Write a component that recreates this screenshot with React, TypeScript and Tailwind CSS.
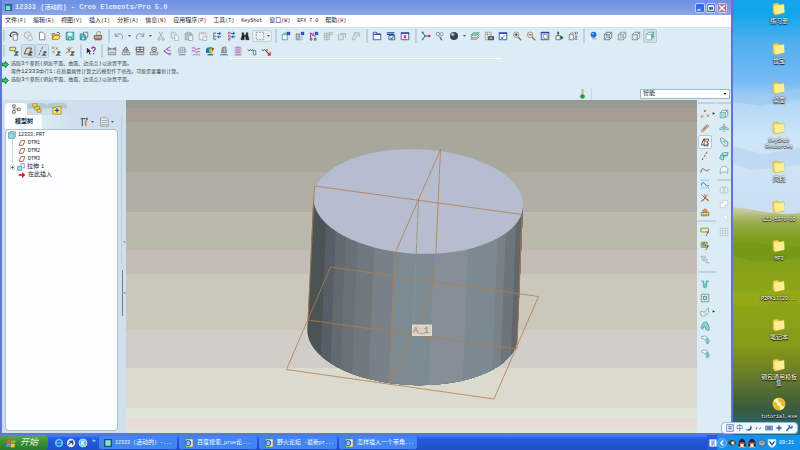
import React from "react";

type Kids = { children?: React.ReactNode };

/* Chinese text with its Latin runs set in a narrower monospace size */
function Mixed({ text, latin = "text-[5px]" }: { text: string; latin?: string }) {
  return (
    <>
      {text.split(/([\x20-\x7e]+)/).map((part, i) =>
        i % 2 ? (
          <span key={i} className={latin}>{part}</span>
        ) : (
          part
        )
      )}
    </>
  );
}

function Svg({ children, size = "size-3" }: Kids & { size?: string }) {
  return (
    <svg viewBox="0 0 12 12" className={`${size} shrink-0`} fill="none" stroke="#566069" strokeWidth="1" aria-hidden="true">
      {children}
    </svg>
  );
}

const paper = <path d="M3 1.500h4l2.500 2.500v6.500h-6.500z" fill="#fff" stroke="#777" />;
const ruler = <path d="M1.500 7.500h9v3h-9zM4 9v1.500M6 9v1.500M8 9v1.500" fill="#eef0f0" stroke="#666" strokeWidth=".8" />;
const cube = (fill: string, stroke: string, inner = false) => (
  <>
    <path d="M1.500 4.500h6v6h-6zM1.500 4.500l3-3h6l-3 3M7.500 10.500l3-3v-6" fill={fill} stroke={stroke} />
    {inner && <path d="M4.500 1.500v6h6M4.500 7.500l-3 3" stroke={stroke} strokeWidth=".7" />}
  </>
);
const cross = (x: number, y: number, c = "#b0622f") => (
  <path key={`${x}-${y}`} d={`M${x - 1.3} ${y - 1.3}l2.600 2.600M${x + 1.3} ${y - 1.3}l-2.600 2.600`} stroke={c} />
);
const badge = <path d="M7 1h4v4h-4z" fill="#3154b8" stroke="none" />;
const eye = <path d="M6 11.500l2.500-3 2.500 3zM8 6.500h3v2h-3z" fill="#4c5b58" stroke="#4b645c" strokeWidth=".5" />;
const plane = <path d="M1.500 9.500l3-7h6l-3 7z" stroke="#8d4a25" strokeWidth="1.200" />;
const lens = (mark: React.ReactNode) => (
  <>
    <path d="M7 7l4 4" stroke="#b36a32" strokeWidth="1.800" />
    <circle cx="5" cy="4.500" r="3.300" fill="#f6f4e4" stroke="#888" />
    {mark}
  </>
);
const win = (body: React.ReactNode) => (
  <>
    <path d="M1.500 2.500h9v8h-9z" fill="#fff" stroke="#2644a8" />
    <path d="M1 2.500h10" stroke="#2644a8" strokeWidth="1.800" />
    {body}
  </>
);

const I: Record<string, React.ReactNode> = {
  home: <><path d="M1.500 6c0-6 9-6 9-.5" stroke="#555" strokeWidth="1.400" /><path d="M5 4h3l2 2v5h-5z" fill="#fff" stroke="#777" /><path d="M1 5l2 2" stroke="#222" strokeWidth="1.500" /></>,
  globe: <><circle cx="5.500" cy="5" r="4" fill="#e4e7e8" stroke="#a5acb0" /><path d="M6 6h4l1 2v3h-5z" fill="#f5f6f6" stroke="#a5acb0" /></>,
  file: paper,
  open: <><path d="M1.500 10V3h3l1 1.500h4V6" fill="#e8bd48" stroke="#9b7b22" /><path d="M1.500 10l2-4.500h7.500l-2 4.500z" fill="#ffe278" stroke="#9b7b22" /><path d="M7 2c2-1 3 0 3.500 1.500" stroke="#333" /></>,
  save: <><path d="M1.500 1.500h9v9h-9z" fill="#6ad3d8" stroke="#338085" /><path d="M3.500 2h5v3.500h-5z" fill="#e9f8f8" stroke="none" /><path d="M4 8h4v2.500h-4z" fill="#fff" stroke="#338085" /></>,
  saveas: <><path d="M1.500 3.500h7v7h-7z" fill="#57c9cf" stroke="#338085" /><path d="M3 7.500h4v3h-4z" fill="#fff" stroke="#338085" /><path d="M5.500 1.500h5v6h-3v-3h-2z" fill="#dff1ee" stroke="#5b7775" /></>,
  print: <><path d="M4 5l1-4h4l-1 4z" fill="#fff" stroke="#887" /><path d="M1.500 5.500h9v4h-9z" fill="#c9aa8d" stroke="#6d5848" /><path d="M2 10.500h8" stroke="#514239" /></>,
  undo: <path d="M1.500 2.500v4h4M2 6c2-4 8-3 8.500 1 0 1-.5 2-1.500 3" stroke="#8197a8" strokeWidth="1.200" />,
  redo: <path d="M10.500 2.500v4h-4M10 6c-2-4-8-3-8.500 1 0 1 .5 2 1.500 3" stroke="#8197a8" strokeWidth="1.200" />,
  cut: <><path d="M3.500 1l4 7M8 1l-4 7" stroke="#9ba6ad" /><circle cx="3.500" cy="9.500" r="1.500" stroke="#9ba6ad" /><circle cx="8.500" cy="9.500" r="1.500" stroke="#9ba6ad" /></>,
  copy: <><path d="M1.500 1.500h4l2 2v5h-6z" fill="#e5e9ec" stroke="#a4adb3" /><path d="M5.500 4.500h3l2 2v5h-5z" fill="#f1f3f4" stroke="#a4adb3" /></>,
  paste: <><path d="M1.500 2.500h8v8h-8z" fill="#b7c0c4" stroke="#9aa4a9" /><path d="M4 1.500h3v2h-3zM5.500 5.500h5v6h-5z" fill="#eef1f2" stroke="#9aa4a9" /></>,
  paste2: <><path d="M1.500 2.500h8v8h-8z" fill="#eef1f2" stroke="#a9b1b5" /><path d="M4 1.500h3v2h-3zM6 6.500h4.500v5h-4.500z" fill="#f4f4ee" stroke="#a9b1b5" /></>,
  regen: <><path d="M2 2v8M2 3h2M2 6.500h2M2 10h2" stroke="#59666e" /><path d="M3 1.500h2v2h-2zM3 5.500h2v2h-2zM3 9h2v2h-2z" fill="#8f9a9f" stroke="none" /><path d="M6 3h4M8.500 1l2 2-2 2M11 7h-4M8.500 5.500l-2 1.500 2 1.500" stroke="#1e5bc4" strokeWidth="1.200" /></>,
  regen2: <><path d="M3 1.500h2v2h-2zM3 5.500h2v2h-2zM3 9h2v2h-2z" fill="#fff" stroke="#a73a38" strokeWidth=".8" /><path d="M6 3h4M8.500 1l2 2-2 2M11 7h-4M8.500 5.500l-2 1.500 2 1.500" stroke="#1e5bc4" strokeWidth="1.200" /></>,
  find: <path d="M2.500 2h2v2l1 1h1l1-1V2h2v3l1.500 5.500h-4V7h-2v3.500H1L2.500 5z" fill="#1f2426" stroke="#1f2426" strokeWidth=".5" />,
  mark: <path d="M1.500 1.500h9v9h-9z" stroke="#6f8592" strokeDasharray="2 1.500" />,
  box1: <><path d="M1.500 4.500h6v6h-6z" fill="#fff" stroke="#4e9ca0" /><path d="M1.500 4.500l2-2h4" stroke="#4e9ca0" />{badge}</>,
  box2: <><path d="M1.500 3.500h4v7h-4z" fill="#b6bfc3" stroke="#788489" /><path d="M5.500 7h3v3.500h-3z" fill="#eef2f3" stroke="#98a2a6" />{badge}</>,
  box3: <><path d="M2 8V2l3 4V2M6 6h2" stroke="#a72b9d" strokeWidth="1.200" /><path d="M1.500 8.500h2v2.500h-2zM6.500 8.500h2v2.500h-2z" stroke="#333" strokeWidth=".8" />{badge}</>,
  g1: <><path d="M1.500 2.500h6v8h-6zM1.500 5h6M1.500 7.500h6M4.500 2.500v8" fill="#e7ebec" stroke="#a4adb1" /><path d="M8 1.500h3v3h-3z" stroke="#a4adb1" /></>,
  g2: <><path d="M1.500 4.500h6v6h-6z" fill="#dfe5e7" stroke="#a4adb1" /><path d="M4 3h6v5" stroke="#a4adb1" /></>,
  g3: <path d="M1.500 10.500c0-5 3-7 9-7v2.500c-4 0-6 1-6 4.500zM4 5V2h6" fill="#e3e7e9" stroke="#a4adb1" />,
  w1: <><path d="M1.500 1.500h4v2h5v7h-9z" fill="#fff" stroke="#2644a8" /><path d="M1.500 4h9" stroke="#2644a8" strokeWidth="1.400" /></>,
  w2: <><path d="M1 2h9M1 4h9" stroke="#2644a8" strokeWidth="1.300" /><path d="M3.500 5.500h7v5h-7z" fill="#fff" stroke="#2644a8" /><path d="M5 8l1.500 1.500 3-3" stroke="#24963f" strokeWidth="1.300" /></>,
  w3: win(<path d="M4.500 5l3 4M7.500 5l-3 4" stroke="#d22" strokeWidth="1.300" />),
  csys: <><path d="M2 2l3 4-3 4M5 6h5" stroke="#226" /><circle cx="2" cy="2" r="1.300" fill="#28a63b" stroke="none" /><circle cx="2" cy="10" r="1.300" fill="#1fb4c4" stroke="none" /><circle cx="10" cy="6" r="1.500" fill="#dd2438" stroke="none" /></>,
  spin: <><circle cx="3.500" cy="3.500" r="2" stroke="#7689a5" /><circle cx="8" cy="4" r="2" stroke="#7689a5" /><path d="M4 6l5 5M7 7v4" stroke="#47597d" /></>,
  ball: <><circle cx="6" cy="6" r="4.800" fill="#39424a" stroke="none" /><circle cx="4.600" cy="4.300" r="2.200" fill="#8d979e" stroke="none" /><circle cx="4.200" cy="3.900" r="1" fill="#dfe4e7" stroke="none" /></>,
  layers: <><path d="M1 10l3-3h7l-3 3z" fill="#d8d3b2" stroke="#6c6a55" strokeWidth=".7" /><path d="M1 7.500l3-3h7l-3 3z" fill="#fff" stroke="#55716c" strokeWidth=".7" /><path d="M1 5l3-3h7l-3 3z" fill="#83d6d3" stroke="#55716c" strokeWidth=".7" /></>,
  snap: <><path d="M1.500 1.500h7v9h-7zM1.500 4h7M4 1.500v9" fill="#fff" stroke="#999" /><path d="M5.500 6.500h6v4h-6z" fill="#666" stroke="#444" /><circle cx="8.500" cy="8.500" r="1.100" fill="#ddd" stroke="none" /></>,
  repaint: win(<path d="M4 9l5-4M4 9V7M4 9h2" stroke="#3b7abb" />),
  zin: lens(<path d="M3 4.500h4M5 2.500v4" stroke="#333" />),
  zout: lens(<path d="M3 4.500h4" stroke="#333" />),
  zfit: <><path d="M1.500 1.500h9v9h-9z" fill="#dbe3f0" stroke="#2644a8" /><path d="M1 2h10" stroke="#2644a8" strokeWidth="1.500" /><path d="M4.500 4h3l1 1.500v3l-2 1-2-1z" fill="#fff" stroke="#887" /></>,
  orient: <><path d="M2.500 5.500h5v5h-5z" fill="#e7f2f0" stroke="#5a6868" /><path d="M5 1v4M8 6l3 2-3 2M4 3l1-2 1 2" fill="#274b49" stroke="#274b49" /></>,
  views: <><path d="M1.500 4.500h5v6h-5zM1.500 4.500l2-2h4M6.500 10.500l1.500-2" fill="#fff" stroke="#777" /><path d="M9 1v3M11 1v3M8.500 6h2.500M8.500 8h2.500M8.500 10h2.500" stroke="#555" /></>,
  real: <><path d="M1 9.500h10" stroke="#fff" strokeWidth="3" /><path d="M3 9.500h7" stroke="#a4b6c5" strokeWidth="1.500" /><circle cx="5.500" cy="4.500" r="3.500" fill="#1c72e4" stroke="none" /><circle cx="4.600" cy="3.300" r="1" fill="#b9dcff" stroke="none" /></>,
  wire: cube("none", "#6b767b", true),
  hidden: cube("none", "#8b969b", true),
  nohid: cube("none", "#7b868b"),
  shaded: <>{cube("#d9f6f4", "#82999c")}<path d="M2 5h5v5h-5z" fill="#fff" stroke="none" /><path d="M8 5l2.500-3v5.500l-2.500 2.500z" fill="#5ab6b3" stroke="none" /></>,
  tag: <><path d="M1 1.500h7v4h-7z" fill="#e8ea84" stroke="#77803a" /><path d="M6 6l2 2" />{eye}</>,
  dplane: <>{plane}{eye}</>,
  daxis: <><path d="M2 11l5-10" stroke="#8d4a25" strokeDasharray="3 1" />{eye}</>,
  dpoint: <>{cross(3, 7)}{cross(7, 3)}{cross(2.5, 2)}{eye}</>,
  dcsys: <><path d="M1 9l8-8M2 3l5 4M5 1v7" stroke="#a8622f" />{eye}</>,
  help: <><path d="M1 2v7l2-2 1.500 3.500 1-.5-1.500-3.500h2.500z" fill="#222" stroke="none" /><path d="M7 3.500c0-3 4-2.500 4 0 0 1.500-2 1.500-2 3.500M9 8.500v1.500" stroke="#9b1c96" strokeWidth="1.500" /></>,
  m1: <><path d="M1.500 1v5M10.500 1v5M2 3.500h8M3.500 2v3M8.500 2v3" stroke="#555" strokeWidth=".9" />{ruler}</>,
  m2: <><path d="M2 6l4-5 3 5zM4 4h4" stroke="#555" />{ruler}</>,
  m3: <><path d="M1.500 1.500h9v5h-9zM6 1v5M1 4h9" stroke="#444" fill="#fff" />{ruler}</>,
  m4: <><circle cx="6" cy="4" r="2.800" fill="#eee" stroke="#555" /><path d="M4 4h4" />{ruler}</>,
  m5: <><path d="M1 6c3-1 4-4 8-5M1 6c3 2 5 4 9 3M4 4l5 2" stroke="#b24bc0" strokeWidth="1.200" /><path d="M2 7l7 4" stroke="#6b6dc0" /></>,
  m6: <><path d="M1.500 5c0-5 9-5 9 0v3h-9zM4 2v6M6.500 1.500v6.500M9 2v6M2 5h8" fill="#dde5ea" stroke="#8b98a0" strokeWidth=".8" /><path d="M2 10.500h8" /></>,
  m7: <><path d="M1 3c3-3 4 2 6 1s3-1 4-1M1 6.500c3-3 4 2 6 1s3-1 4-1" stroke="#b23cb0" strokeWidth="1.200" /><path d="M2 10.500h9" stroke="#8a7ab0" /></>,
  m8: <><path d="M1 8c0-8 7-8 10-5l-3 6z" fill="#3fbf5a" stroke="none" /><path d="M1 8c0-4 1-6 3-6.500l1 6z" fill="#2563eb" stroke="none" /><path d="M7 1.500l4 1.500-2.500 4z" fill="#e53a2f" stroke="none" /><path d="M5 6l3-3 1 5z" fill="#f4d92e" stroke="none" /><path d="M3 10.500h7" stroke="#555" strokeWidth="1.500" /></>,
  m9: <><path d="M3 8l1-6 4-1 1 7z" fill="#b0b9c3" stroke="#6c7580" /><path d="M5 3v5" stroke="#c0568e" /><path d="M1.500 10.500h9" stroke="#319a98" strokeWidth="1.500" /></>,
  m10: <><path d="M3 1.500h6M3 3.700h6M3 6h6M3 8.200h6" stroke="#b45bab" strokeWidth="1.200" /><path d="M2.500 1v8M9.500 1v8" stroke="#d08cc8" strokeWidth=".8" /><path d="M2 10.700h8" stroke="#666" /></>,
  m11: <><path d="M1 4l1.500 2 1.500-2 1.500 2 1.500-2 1 2" stroke="#555" /><path d="M7.500 5.500h3v5h-3z" fill="#eee" stroke="#477" /></>,
  m12: <><path d="M1 4l1.500 2 1.500-2 1.500 2 1.500-2 1 2" stroke="#555" /><path d="M6 6l4 4M11 7v4h-3" stroke="#b6352b" strokeWidth="1.400" /></>,
  r1: <>{cross(6, 2.5)}{cross(2.5, 9)}{cross(9.5, 8)}</>,
  r2: <><path d="M1.500 9l7-7 2 1.500-7 7z" fill="#e4d0b4" stroke="#a06b48" /><path d="M4 8l4-4" stroke="#a06b48" /></>,
  r3: <>{plane}<path d="M5 3v8l2-1.500 1.500 2 1-1-1.500-2h2.500z" fill="#fff" stroke="#111" strokeWidth=".8" /></>,
  r4: <path d="M2.500 11l6-10" stroke="#a05224" strokeDasharray="3 1.500" strokeWidth="1.200" />,
  r5: <path d="M1 9c1-6 3-5 5-3s4 1 5-1" stroke="#a05224" strokeWidth="1.200" />,
  r6: <><path d="M1.500 1.500h9M1.500 10.500h9" stroke="#3b8df0" strokeDasharray="1 1" /><path d="M1.500 8c1-5 3-4 4.500-2s2.500 3 4.500 2" stroke="#1f6bd8" strokeWidth="1.200" /></>,
  r7: <path d="M6 6v-5M6 6l-5 4M6 6l5 3M2 2l8 8M9 2l-6 8" stroke="#a85c30" />,
  r8: <><path d="M3 5l3-3 3 3z" fill="#e9c9a6" stroke="#a05224" /><path d="M1.500 6.500h9v4h-9zM4 8v2M6 8v2M8 8v2" fill="#f4e39a" stroke="#92702a" /></>,
  r9: <><path d="M1 1.500h9v4.500h-9z" fill="#f2ef9a" stroke="#85853c" /><path d="M10 6l-3 5M8 6h3" stroke="#555" /></>,
  r10: <><path d="M1.500 1.500h7v6h-7zM3 3l4 3" fill="#e9e4a0" stroke="#77773c" /><circle cx="5" cy="4.500" r="1.700" /><path d="M10 6l-3 5M8 6h3" stroke="#555" /></>,
  r11: <path d="M1.500 1.500h5v2h-5zM3.500 5h5v2h-5zM6.500 9h4v2" stroke="#a5b0b7" />,
  s1: <path d="M1 2.500h3v3h1v5h2v-5h1v-3h3M4 2v8M8 2v8" fill="#a4ebea" stroke="#4aa9ac" />,
  s2: <><path d="M1.500 1.500h9v9h-9z" fill="#eee" stroke="#788" /><path d="M4 4h4v4h-4z" fill="#a4ebea" stroke="#2a8f80" /></>,
  s3: <><path d="M1 5l3 1 3-1v5l-3 1-3-1zM7 5l3-4v6l-3 3" fill="#fff" stroke="#8b9b9e" /><path d="M4 6l3-1v5h-3z" fill="#a4ebea" stroke="none" /></>,
  s4: <path d="M1 8l3-6 4-1 3 6v4h-3l-3-5-2 4z" fill="#81d5d5" stroke="#61989b" />,
  s5: <><path d="M2 2l4-1c3 1 5 4 5 8l-3 2c0-4-2-6-6-7z" fill="#f3f8f8" stroke="#8b9da1" /><path d="M6 5c2 1 2 3 2 6l3-2c0-3-1-5-3-6z" fill="#5ecaca" stroke="none" /></>,
  c1: <>{cube("#eaf7f7", "#6b8f95")}<path d="M2 5h5v5h-5z" fill="#8fe6e4" stroke="none" /></>,
  c2: <><path d="M6 1v10" stroke="#555" strokeDasharray="2 1" /><path d="M5 4L1 6.500v2L5 7zM7 4l4 2.500v2L7 7z" fill="#bfe9ea" stroke="#5a8f94" strokeWidth=".8" /></>,
  c3: <><path d="M1.500 2l2-1 7 5v5h-4l-4-5z" fill="#cdeeee" stroke="#6b8f95" /><path d="M4 5l4-1v4z" fill="#5ecaca" stroke="none" /></>,
  c4: <path d="M1 9c1-6 4-8 10-7l-1 4c-4-1-4 1-5 5zM4 3l2 5M2 6l7-1" fill="#a8eae9" stroke="#4d9c9c" />,
  c5: <path d="M1.500 10.500V5c2-5 7-4 9-1v6c-3-3-6-2-9 .5z" fill="#edf6f8" stroke="#8da5ae" />,
  d1: <path d="M5 2v8l-3.500-1V4zM7 2v8l3.500-1V4z" fill="#eef2f4" stroke="#b2bec4" />,
  d2: <path d="M4.500 1.500h6v6h-3v3h-6v-6h3z" fill="#f5f8f9" stroke="#bfcbd0" />,
  d3: <path d="M3 2.500h7v8l-3-4z" fill="#fff" stroke="#ced7db" />,
  d4: <path d="M1.500 1.500h9v9h-9zM4.500 2v8M7.500 2v8M2 4.500h8M2 7.500h8" fill="#f2f7f9" stroke="#a9bcc4" strokeWidth=".8" />,
};

function Tool({ id, on, hover }: { id: string; on?: boolean; hover?: boolean }) {
  return (
    <button
      type="button"
      aria-label={id}
      aria-pressed={on}
      className={`flex h-3.5 w-3.5 shrink-0 items-center justify-center rounded-xs ${on ? "border border-[#b3cbd9] bg-[#cfe0ec]" : ""} ${hover ? "border border-[#a9c9e8] bg-[#f4f9fd]" : ""}`}
    >
      <Svg size="size-2.5">{I[id]}</Svg>
    </button>
  );
}
const tools = (ids: string) => ids.split(" ").map((id) => <Tool key={id} id={id} />);

const Sep = () => <div className="mx-0.5 h-3.5 w-[3px] shrink-0 border-l border-[#dcecf5] bg-[#bdd2dd]" />;
const Drop = () => (
  <svg viewBox="0 0 6 4" className="mx-0.5 h-0.5 w-[3px] shrink-0" aria-hidden="true"><path d="M0 0h6L3 4z" fill="#52616b" /></svg>
);

const menus = ["文件(F)", "编辑(E)", "视图(V)", "插入(I)", "分析(A)", "信息(N)", "应用程序(P)", "工具(T)", "KeyShot", "窗口(W)", "EFX 7.0", "帮助(H)"];

function TitleBar() {
  const box = "flex size-2.5 items-center justify-center rounded-xs border border-[#c3d0fa]";
  return (
    <header className="flex h-[15px] shrink-0 items-center gap-[3px] bg-linear-to-b from-[#6e90e6] via-[#7b97e2] to-[#8ba8ea] pr-1 pl-[3px]">
      <svg viewBox="0 0 8 8" className="size-[7px]" aria-hidden="true"><path d="M0 0h8v8H0z" fill="#2f5f7e" /><path d="M1 2h5v5H1z" fill="#6fe0d8" /></svg>
      <h1 className="flex-1 text-[6px] leading-[15px] font-bold text-[#dfe8ff]">
        <Mixed text="12333 (活动的) - Creo Elements/Pro 5.0" latin="text-[7px]" />
      </h1>
      <div className="flex gap-px pt-px">
        <button type="button" aria-label="最小化" className={`${box} bg-[#3f67e0]`}><Svg size="size-2"><path d="M2 9h5" stroke="#fff" strokeWidth="2" /></Svg></button>
        <button type="button" aria-label="最大化" className={`${box} bg-[#3f67e0]`}><Svg size="size-2"><path d="M2 2.500h8v7h-8zM2 3.500h8" stroke="#fff" strokeWidth="1.500" /></Svg></button>
        <button type="button" aria-label="关闭" className={`${box} bg-[#b8708c]`}><Svg size="size-2"><path d="M2 2l8 8M10 2l-8 8" stroke="#fff" strokeWidth="2" /></Svg></button>
      </div>
    </header>
  );
}

function Message({ text, arrow }: { text: string; arrow?: boolean }) {
  return (
    <p className="flex h-2 items-center gap-0.5">
      <svg viewBox="0 0 8 8" className="size-[7px]" aria-hidden="true">
        {arrow && <path d="M.5 2.500h3V.5L7.500 4 3.500 7.500v-2h-3z" fill="#2fd04a" stroke="#14702a" />}
      </svg>
      <span className="text-[5px] leading-2"><Mixed text={text} latin="text-[6px]" /></span>
    </p>
  );
}

function Tree() {
  const rows = ["DTM1", "DTM2", "DTM3"];
  const row = "flex h-2 items-center gap-0.5";
  return (
    <ul className="min-h-0 flex-1 rounded-sm border border-[#a6c4d2] bg-[#fdfeff] px-0.5 pt-px text-[6px] leading-2">
      <li className={row}>
        <Svg size="size-2"><path d="M1 3h8v8h-8z" fill="#82ece4" stroke="#347f86" /><path d="M1 3l2-2h8v8l-2 2" stroke="#347f86" /></Svg>
        <Mixed text="12333.PRT" />
      </li>
      {rows.map((r) => (
        <li key={r} className={`${row} ml-1 border-l border-[#c3dbe4] pl-[5px]`}><Svg size="size-2">{plane}</Svg><Mixed text={r} /></li>
      ))}
      <li className={`${row} ml-0.5`}>
        <Svg size="size-[5px]"><path d="M1 1h10v10h-10z" stroke="#8cb2c0" fill="#fff" /><path d="M3 6h6M6 3v6" stroke="#345" strokeWidth="2" /></Svg>
        <Svg size="size-2"><path d="M1 5h6v6h-6z" fill="#8fe6e4" stroke="#4a8588" /><path d="M6 4V1h5v6h-3" stroke="#4a8588" /></Svg>
        <Mixed text="拉伸 1" />
      </li>
      <li className={`${row} ml-1 pl-1.5`}>
        <Svg size="size-2"><path d="M1 6h6" stroke="#dc1c1c" strokeWidth="2.500" /><path d="M6 1.500L11 6l-5 4.500z" fill="#dc1c1c" stroke="none" /></Svg>
        在此插入
      </li>
    </ul>
  );
}

function SidePanel() {
  return (
    <aside className="flex w-31 shrink-0 bg-[#cfdfee]">
      <div className="flex min-w-0 flex-1 flex-col pb-0.5 pl-[3px]">
        <div className="flex h-[15px] items-end">
          <button type="button" aria-label="模型树选项卡" className="flex h-3 w-5.5 items-center justify-center rounded-t-sm bg-white"><Svg size="size-2.5"><path d="M2 1h3v3H2zM2 8h3v3H2zM8 5h3v3H8zM3.500 4v4M5 6h3" /></Svg></button>
          <button type="button" aria-label="文件夹" className="flex h-3 w-5 items-start justify-center rounded-t-sm bg-linear-to-b from-[#b3cad2] from-40% to-[#cfdfee] to-50%"><Svg size="size-2.5"><path d="M1 1h5v4H1zM3 4h6v4H3zM6 7h5v4H6z" fill="#fbe26c" stroke="#a48a27" /></Svg></button>
          <button type="button" aria-label="收藏夹" className="flex h-3 w-5 items-end justify-center rounded-t-sm bg-linear-to-b from-[#b3cad2] from-40% to-[#cfdfee] to-50%"><Svg size="size-2.5"><path d="M1 3h4l1-1h5v9H1z" fill="#fbe868" stroke="#a48a27" /><path d="M6 4v5M3.500 6.500h5" stroke="#234bb5" strokeWidth="1.500" /></Svg></button>
        </div>
        <div className="flex h-3.5 items-center bg-linear-to-r from-white from-32% via-[#dcecf5] via-33% to-[#cfdfee] to-60% pr-0.5">
          <h2 className="flex-1 pl-2.5 text-[6px] leading-3 font-bold">模型树</h2>
          <Svg size="size-2.5"><path d="M2 2h6M4 2v9" stroke="#666" strokeWidth="1.500" /><path d="M8 4v7" stroke="#c98c55" strokeWidth="2" /><path d="M9.500 1v3" stroke="#3266bc" strokeWidth="2" /></Svg>
          <Drop />
          <div className="w-[3px]" />
          <Svg size="size-2.5"><path d="M2 1h7l2 2v8H2zM3 4h7M3 6.500h7M3 9h7" fill="#fff" stroke="#78878c" /></Svg>
          <Drop />
        </div>
        <Tree />
      </div>
      <div className="flex w-2 flex-col items-end gap-1.5 pt-4">
        <button type="button" aria-label="折叠" className="flex h-37 w-[5px] items-end border-l border-[#bccfdd] pb-5 pl-px text-[4px] leading-1">◂</button>
        <button type="button" aria-label="调整宽度" className="flex h-11.5 w-1 items-center border-l border-[#6f7f96] text-[4px] leading-1">◂</button>
      </div>
    </aside>
  );
}

const facets: [number, string][] = [
  [300, "#4a5455"], [328, "#565f68"], [338, "#606a6f"], [348, "#677177"], [360, "#70787e"], [377, "#788189"],
  [397, "#7c8a92"], [437, "#868f98"], [471, "#7b8a91"], [500, "#788187"], [508, "#6d757b"], [518, "#60686d"],
];

function Viewport() {
  return (
    <main className="relative flex min-w-0 flex-1 flex-col">
      <div className="h-2 bg-[#989b94]" />
      <div className="h-3.5 bg-[#a79d95]" />
      <div className="flex-50 bg-[#a7a89b]" />
      <div className="flex-40 bg-[#b0ada7]" />
      <div className="flex-38 bg-[#bbb8ac]" />
      <div className="flex-24 bg-[#c6bcb7]" />
      <div className="flex-56 bg-[#cbc8bb]" />
      <div className="flex-38 bg-[#d1cdc8]" />
      <div className="flex-40 bg-[#dadacf]" />
      <div className="h-2.5 bg-[#e1e5d7]" />
      <div className="h-2.5 bg-[#e7dcd7]" />
      <div className="h-[5px] bg-[#e1e5d7]" />
      <svg viewBox="126 100 571 333" className="absolute inset-0 size-full" role="img" aria-label="拉伸圆柱体">
        <defs>
          <clipPath id="body">
            <path d="M313.300 198L307.300 330A105 51 2.500 0 0 517.300 338L523 206A105 52.300 2.500 0 0 313.300 198z" />
          </clipPath>
        </defs>
        <g clipPath="url(#body)">
          {facets.map(([x, c]) => (
            <polygon key={x} points={`${x + 1.5},140 540,140 540,400 ${x - 9},400`} fill={c} />
          ))}
        </g>
        <ellipse cx="418.300" cy="201.500" rx="105" ry="52.200" transform="rotate(2.500 418.300 201.500)" fill="#b6bdce" />
        <g fill="none" stroke="#b67b48" strokeWidth=".8">
          <path d="M314.500 186L522 214.500L517 349L308 320z" />
          <path d="M440.500 149.500L396 251L390.500 385L434.500 282z" />
          <path d="M330.500 267L538.500 296.500L494 399L286.500 369.500z" />
          <path d="M418.500 200L413 330" stroke="#93917b" strokeDasharray="20 1" />
        </g>
        <rect x="412.500" y="325" width="19" height="10.500" fill="#d8d1c6" stroke="#efe6da" strokeWidth=".8" />
        <text x="413" y="333" fontSize="9" fill="#b67b48" className="font-['Liberation_Mono',monospace]">A_1</text>
      </svg>
    </main>
  );
}

const Bar = () => <div className="my-1 h-0.5 w-full bg-[#c0d2dc]" />;

function FeatureBar() {
  return (
    <nav aria-label="特征工具" className="flex w-[34px] shrink-0 gap-px bg-[#dcecf5] pt-0.5">
      <div className="flex w-[19px] flex-col pl-px">
        <div className="h-0.5 bg-[#c0d2dc]" />
        <div className="h-[3px]" />
        <div className="flex items-center"><Tool id="r1" /><span className="text-[6px] leading-2">▸</span></div>
        {tools("r2")}
        <Tool id="r3" hover />
        {tools("r4 r5 r6 r7 r8")}
        <div className="my-px h-0.5 bg-[#c0d2dc]" />
        <div className="h-0.5" />
        {tools("r9 r10 r11")}
        <Bar />
        {tools("s1 s2")}
        <div className="flex items-center"><Tool id="s3" /><span className="text-[6px] leading-2">▸</span></div>
        {tools("s4 s5")}
        <Tool id="s5" />
      </div>
      <div className="flex flex-1 flex-col">
        <div className="h-0.5 bg-[#c0d2dc]" />
        <div className="h-[3px]" />
        {tools("c1 c2 c3 c4 c5")}
        <div className="my-0.5 h-0.5 bg-[#c0d2dc]" />
        {tools("d1 d2 d3 d4")}
      </div>
    </nav>
  );
}

function CadWindow() {
  return (
    <section className="flex min-w-0 flex-1 flex-col border-x-2 border-b-2 border-[#6274d6] bg-[#dcecf5]">
      <TitleBar />
      <nav className="flex h-[13px] shrink-0 items-center gap-[7px] border-b border-[#d3e3ec] bg-white pl-[3px] text-[6px] leading-3">
        {menus.map((m) => <button key={m} type="button" className="whitespace-nowrap"><Mixed text={m} /></button>)}
      </nav>
      <div className="flex h-[15px] shrink-0 items-center pl-px">
        <div className="mr-0.5 h-3 w-0.5 bg-[#bdd2dd]" />
        {tools("home globe file open save saveas print")}
        <Sep />
        <Tool id="undo" /><Drop /><Tool id="redo" /><Drop />
        {tools("cut copy paste paste2 regen regen2 find")}
        <button type="button" aria-label="选择框" className="flex h-3 w-5 items-center rounded-xs border border-[#c2d0d8] bg-[#e8f0f4] pl-0.5"><Svg size="size-2.5">{I.mark}</Svg><Drop /></button>
        <Sep />
        {tools("box1 box2 box3 g1 g2 g3")}
        <Sep />
        {tools("w1 w2 w3")}
        <Sep />
        {tools("csys spin ball")}<Drop />
        {tools("layers snap repaint zin zout zfit orient views")}
        <Sep />
        {tools("real wire hidden nohid")}
        <Tool id="shaded" on />
      </div>
      <div className="flex h-[15px] shrink-0 items-center pl-px">
        <div className="mr-0.5 h-3 w-0.5 bg-[#bdd2dd]" />
        <Tool id="tag" /><Tool id="dplane" on /><Tool id="daxis" on /><Tool id="dpoint" /><Tool id="dcsys" />
        <Sep />
        <Tool id="help" />
        <Sep />
        {tools("m1 m2 m3 m4 m5 m6 m7 m8 m9 m10 m11 m12")}
      </div>
      <div className="ml-57 h-px w-68 bg-white" />
      <div className="mt-px h-7 text-[#3f474d]">
        <Message arrow text="选取3个参照(例如平面、曲面、边或点)以放置平面。" />
        <Message text="零件12333中行1:在质量属性计算之后模型作了修改。可能需要重新计算。" />
        <Message arrow text="选取3个参照(例如平面、曲面、边或点)以放置平面。" />
      </div>
      <div className="flex h-3 shrink-0 items-center justify-end pr-px">
        <svg viewBox="0 0 6 12" className="h-2.5 w-[5px]" aria-hidden="true"><path d="M2 0h2v7H2z" fill="#d39aa2" /><circle cx="3" cy="5" r="1.500" fill="#d9d36b" /><circle cx="3" cy="9" r="2.800" fill="#229a37" /></svg>
        <div className="mr-12 ml-1.5 h-3 w-px bg-[#c4d6e6]" />
        <div className="relative">
          <select aria-label="选择过滤器" className="block h-2.5 w-[90px] appearance-none border border-[#9dbccb] bg-white pl-0.5 text-[6px] leading-2">
            <option>智能</option>
          </select>
          <svg viewBox="0 0 6 4" className="pointer-events-none absolute top-1 right-[3px] h-0.5 w-1" aria-hidden="true"><path d="M0 0h6L3 4z" fill="#222" /></svg>
        </div>
      </div>
      <div className="flex min-h-0 flex-1">
        <SidePanel />
        <Viewport />
        <FeatureBar />
      </div>
    </section>
  );
}

const desktop = ["练习册", "世宝", "桌面", "KeyShot Resources", "风机", "LZJ-5370-00", "MP3", "P2PKill20...", "笔记本", "钢包通用模板集", "tutorial.exe"];

function Desktop() {
  return (
    <aside className="relative flex w-[67px] shrink-0 flex-col items-end">
      <svg viewBox="0 0 67 435" preserveAspectRatio="none" className="absolute inset-0 size-full" aria-hidden="true">
        <defs>
          <linearGradient id="sky" x1="0" y1="0" x2="0" y2="1">
            <stop offset=".03" stopColor="#12a5ec" />
            <stop offset=".1" stopColor="#50aff0" />
            <stop offset=".19" stopColor="#78bbf4" />
            <stop offset=".24" stopColor="#b4d8f6" />
            <stop offset=".32" stopColor="#cfe6f8" />
            <stop offset=".47" stopColor="#cbdff3" />
          </linearGradient>
          <linearGradient id="grass" x1="0" y1="0" x2="0" y2="1">
            <stop offset="0" stopColor="#cdd2b0" />
            <stop offset=".07" stopColor="#9aab4a" />
            <stop offset=".14" stopColor="#7d9d1c" />
            <stop offset=".4" stopColor="#8fa616" />
            <stop offset=".6" stopColor="#869b18" />
            <stop offset=".75" stopColor="#66792a" />
            <stop offset=".88" stopColor="#3b5a3c" />
            <stop offset="1" stopColor="#236a86" />
          </linearGradient>
        </defs>
        <path d="M0 0h67v435H0z" fill="url(#sky)" />
        <path d="M0 92L30 98L67 88V98L28 106L0 102z" fill="#9cc8f2" opacity=".7" />
        <path d="M0 146L30 154L67 148V165L20 170L0 164z" fill="#bcd6f1" opacity=".8" />
        <path d="M0 207C25 210 45 216 67 213V435H0z" fill="url(#grass)" />
        <path d="M0 244C20 240 45 248 67 246V258L25 262L0 256z" fill="#6a930f" opacity=".5" />
        <path d="M0 290C20 300 40 284 67 292V304C40 298 20 312 0 304z" fill="#9fb01c" opacity=".4" />
      </svg>
      {desktop.map((name, i) => (
        <button key={name} type="button" className="relative mr-px flex min-h-0 w-10 flex-1 flex-col items-center pt-0.5">
          <svg viewBox="0 0 14 14" className="size-3.5 shrink-0" aria-hidden="true">
            {i < 10 ? (
              <>
                <path d="M1 2l5-1 1 2 5-1v9l-9 2-2-2z" fill="#f3d45c" stroke="#c8a238" strokeWidth=".6" />
                <path d="M2 4l10-1.500.5 8L3.500 12.500z" fill="#ffef94" />
              </>
            ) : (
              <>
                <circle cx="7" cy="7" r="6.500" fill="#e9bd2d" />
                <path d="M7 7L1.500 4a6.500 6.500 0 0 1 4-3zM7 7l5.500 3a6.500 6.500 0 0 1-4 3z" fill="#fff3a8" />
                <circle cx="7" cy="7" r="1.800" fill="#fff" />
              </>
            )}
          </svg>
          <span className="mt-[3px] text-center text-[6px] leading-[6px] text-white text-shadow-[0_0_2px_#000,0_1px_1px_#000]"><Mixed text={name} /></span>
        </button>
      ))}
    </aside>
  );
}

const IeIcon = () => <Svg size="size-2.5"><path d="M2 1h9v10H2z" fill="#f1ead2" stroke="#776f5d" /><circle cx="5" cy="6" r="3" stroke="#2a6cd2" strokeWidth="1.500" /><path d="M2 6h6" stroke="#2a6cd2" /></Svg>;

const tasks = ["12333 (活动的) -...", "百度搜索_proe论...", "野火论坛 -最新pr...", "怎样插入一个带角..."];

function Taskbar() {
  return (
    <footer className="flex h-[15px] shrink-0 bg-linear-to-b from-[#3f7de8] from-5% via-[#245bdb] via-25% to-[#1f50c8] text-[6px] text-white">
      <button type="button" className="flex w-12 items-center gap-1 rounded-r-sm bg-linear-to-b from-[#5aa653] via-[#379033] to-[#2c7a2e] pl-1.5 text-[9px] leading-3 text-[#e3f0df] italic">
        <svg viewBox="0 0 10 10" className="size-2.5" aria-hidden="true"><path d="M1 2q2-1.500 4 0L4.500 5q-2-1-4 0z" fill="#f05a28" /><path d="M5.500 2q2 1 4 0L9 5q-2 1-4 0z" fill="#7dc242" /><path d="M.5 5.500q2-1 4 0L4 9q-2-1-4 0z" fill="#4aa3e8" /><path d="M5 5.500q2 1 4 0L8.500 9q-2 1-4 0z" fill="#fcc92e" /></svg>
        开始
      </button>
      <div className="flex w-[51px] items-center gap-0.5 pl-1.5">
        <Svg size="size-2.5"><circle cx="6" cy="6" r="4" stroke="#59c6f4" strokeWidth="2" /><path d="M2 6h8" stroke="#59c6f4" strokeWidth="1.500" /></Svg>
        <Svg size="size-2.5"><circle cx="6" cy="6" r="5" fill="#e6edf0" stroke="none" /><path d="M3 8l5-5M4 4h4v4" stroke="#334e6c" strokeWidth="1.500" /></Svg>
        <Svg size="size-2.5"><circle cx="6" cy="6" r="4.800" fill="#49bdee" stroke="#d4f1ff" /><path d="M4.500 3v6M8 3L5 6l3 3" stroke="#fff" strokeWidth="1.300" /></Svg>
        <span className="pb-1 pl-0.5 text-[6px]">»</span>
      </div>
      <div className="flex min-w-0 flex-1 gap-0.5">
        {tasks.map((t, i) => (
          <button key={t} type="button" className="my-px flex w-[78px] items-center gap-[3px] rounded-xs bg-[#4185ef] pl-[5px] whitespace-nowrap">
            {i ? <IeIcon /> : <Svg size="size-2"><path d="M1 1h10v10H1z" fill="#7ae4dc" stroke="#244f66" strokeWidth="2" /></Svg>}
            <span className="leading-2"><Mixed text={t} /></span>
          </button>
        ))}
      </div>
      <div className="flex items-center bg-linear-to-r from-[#245bdb] from-10% to-[#1592ec] to-12% pr-1.5 pl-0.5">
        <Svg size="size-2"><path d="M1 1h10v10H1z" fill="#fff" stroke="#ccd9f2" /><path d="M3 3h6M3 6h6M3 9h6M6 3v6" stroke="#3569b5" /></Svg>
        <Svg size="size-2.5"><circle cx="6" cy="6" r="5.500" fill="#3a9bf3" stroke="#a7d5ff" strokeWidth=".6" /><path d="M7.500 3L4.500 6l3 3" stroke="#fff" strokeWidth="1.500" /></Svg>
        <Svg size="size-2.5"><path d="M1 6c2-5 8-5 10 0-2 4-8 4-10 0z" fill="#463f35" stroke="none" /><circle cx="7" cy="6" r="2" fill="#e8e6d0" stroke="none" /></Svg>
        {[0, 1].map((n) => (
          <Svg key={n} size="size-2.5"><path d="M2 11c-1-3 0-10 4-10s5 7 4 10z" fill="#20242b" stroke="none" /><path d="M4 6h4v5H4z" fill="#fff" stroke="none" /><path d="M2.500 6h7" stroke="#e23324" strokeWidth="1.800" /><path d="M2 11h3M7 11h3" stroke="#f4b323" strokeWidth="1.500" /></Svg>
        ))}
        <Svg size="size-2.5"><path d="M2 4l4-2 4 2v4l-4 2-4-2z" fill="#a5b1bb" stroke="#4d5c6c" /><path d="M4 5h4" /></Svg>
        <Svg size="size-2.5"><path d="M1.500 2h9v4c0 3-3 5-4.500 5S1.500 9 1.500 6z" fill="#fff" stroke="#dfe9ff" /><path d="M3 4l3 4 3-4" stroke="#2951c2" strokeWidth="1.800" /></Svg>
        <time className="pl-0.5 text-[5px] leading-3">09:21</time>
      </div>
    </footer>
  );
}

function InputMethodBar() {
  return (
    <div className="absolute right-0.5 bottom-4 flex h-3 w-[77px] items-center justify-between rounded-sm border border-[#8ebbe8] bg-[#f4faff] px-1 text-[7px] leading-2 text-[#2a5d9a]">
      <Svg size="size-2"><path d="M1 1h10v10H1zM3 4h6M3 7h6M6 3v6" stroke="#2e5f9a" /></Svg>
      <span>中</span>
      <Svg size="size-2"><path d="M8 1c1 5-2 8-7 7 3 4 10 2 9-4z" fill="#2e5f9a" stroke="none" /></Svg>
      <Svg size="size-2"><path d="M3 5l-1 3M8 5l-1 3" stroke="#2e5f9a" strokeWidth="1.500" /></Svg>
      <Svg size="size-2"><path d="M1 3h10v6H1zM3 5h6M3 7h6" fill="#9fbcdc" stroke="#2e5f9a" /></Svg>
      <Svg size="size-2"><path d="M6 2v8M2 6h8" stroke="#2e5f9a" strokeWidth="2" /></Svg>
      <Svg size="size-2"><path d="M2 10l5-5M6 2l1 3 3 1 1-3" stroke="#2e5f9a" strokeWidth="2" /></Svg>
    </div>
  );
}

export default function App() {
  return (
    <div className="relative flex h-screen flex-col overflow-hidden font-['Liberation_Mono','Noto_Sans_CJK_SC',monospace] text-[#1f2327]" lang="zh-CN">
      <div className="flex min-h-0 flex-1">
        <CadWindow />
        <Desktop />
      </div>
      <Taskbar />
      <InputMethodBar />
    </div>
  );
}
